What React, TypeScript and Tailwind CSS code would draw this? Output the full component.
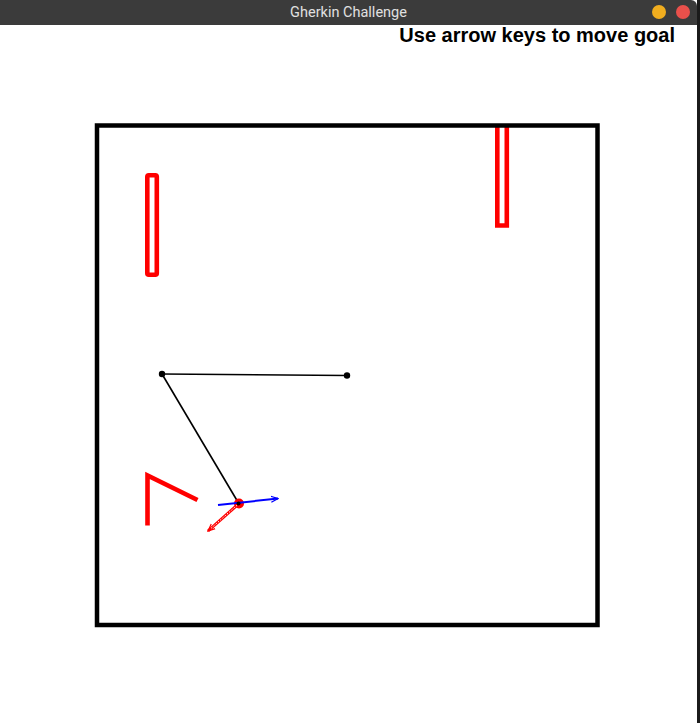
import React from "react";

export default function App() {
  const Y0 = 45; // page y where svg starts
  return (
    <div className="w-[700px] h-[723px] flex bg-white overflow-hidden">
      <div className="w-[697px] h-full flex flex-col">
        <div className="h-[25px] bg-[#3b3b3b] rounded-tr-[6px] flex items-center relative shrink-0">
          <div className="flex-1 text-center text-[14.5px] text-[#e0e0e0] pl-[0px]" style={{ fontFamily: "Roboto, 'Noto Sans', sans-serif" }}>
            Gherkin Challenge
          </div>
          <div className="absolute right-[7px] top-[5px] flex gap-[10px]">
            <div className="w-[14px] h-[14px] rounded-full bg-[#f0ad1f]" />
            <div className="w-[14px] h-[14px] rounded-full bg-[#e9504b]" />
          </div>
        </div>
        <div className="h-[20px] flex justify-end pr-[22px] shrink-0">
          <span className="text-[20px] leading-[20px] font-bold text-black" style={{ fontFamily: "'Liberation Sans', Arial, sans-serif" }}>
            Use arrow keys to move goal
          </span>
        </div>
        <svg width="697" height={723 - Y0} viewBox={`0 ${Y0} 697 ${723 - Y0}`} className="block shrink-0">
          <defs>
            <marker id="bh" markerWidth="8" markerHeight="8" refX="7" refY="4" orient="auto" markerUnits="userSpaceOnUse">
              <path d="M0,1 L7,4 L0,7" fill="none" stroke="#0000ff" strokeWidth="1.2" />
            </marker>
            <marker id="rh" markerWidth="8" markerHeight="8" refX="7" refY="4" orient="auto" markerUnits="userSpaceOnUse">
              <path d="M0,1 L7,4 L0,7" fill="none" stroke="#ff0000" strokeWidth="1.2" />
            </marker>
          </defs>
          {/* red obstacles */}
          <rect x="147.3" y="175.3" width="9.5" height="99.5" rx="1.5" fill="none" stroke="#ff0000" strokeWidth="4.6" />
          <path d="M497.3,124 L497.3,225.5 L506.8,225.5 L506.8,124" fill="none" stroke="#ff0000" strokeWidth="4.6" />
          <path d="M147.5,525.5 L147.5,475.5 L197.5,500" fill="none" stroke="#ff0000" strokeWidth="4.6" strokeLinejoin="miter" />
          {/* frame */}
          <rect x="97" y="125.5" width="500.5" height="499.5" fill="none" stroke="#000" strokeWidth="4.5" />
          {/* path lines */}
          <path d="M162,374 L347,375.5" stroke="#000" strokeWidth="1.6" fill="none" />
          <path d="M162,374 L238.5,503" stroke="#000" strokeWidth="1.6" fill="none" />
          <circle cx="162" cy="374" r="3.2" fill="#000" />
          <circle cx="347" cy="375.5" r="3.2" fill="#000" />
          {/* robot */}
          <circle cx="239" cy="503.5" r="5" fill="#ff0000" />
          <path d="M218,505 L278,498.5" stroke="#0000ff" strokeWidth="2" fill="none" markerEnd="url(#bh)" />
          <path d="M239,503.5 L208,531" stroke="#ff0000" strokeWidth="3" fill="none" markerEnd="url(#rh)" />
          <path d="M237,505.3 L210,529.2" stroke="#ffffff" strokeWidth="1" strokeDasharray="1.5 1.5" fill="none" />
          <circle cx="238.5" cy="503.5" r="2" fill="#000" />
        </svg>
      </div>
      <div className="w-[3px] h-full bg-[#1b1b1b]" />
    </div>
  );
}
